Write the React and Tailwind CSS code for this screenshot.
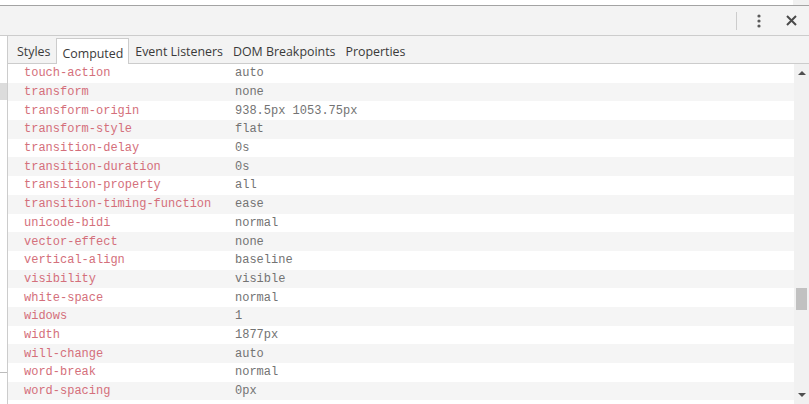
import React from 'react';

const rows = [
  ['touch-action', 'auto'],
  ['transform', 'none'],
  ['transform-origin', '938.5px 1053.75px'],
  ['transform-style', 'flat'],
  ['transition-delay', '0s'],
  ['transition-duration', '0s'],
  ['transition-property', 'all'],
  ['transition-timing-function', 'ease'],
  ['unicode-bidi', 'normal'],
  ['vector-effect', 'none'],
  ['vertical-align', 'baseline'],
  ['visibility', 'visible'],
  ['white-space', 'normal'],
  ['widows', '1'],
  ['width', '1877px'],
  ['will-change', 'auto'],
  ['word-break', 'normal'],
  ['word-spacing', '0px'],
];

const tabs = ['Styles', 'Computed', 'Event Listeners', 'DOM Breakpoints', 'Properties'];

function Kebab() {
  return (
    <svg width="4" height="14" viewBox="0 0 4 14">
      <circle cx="2" cy="2" r="1.6" fill="#5a5a5a" />
      <circle cx="2" cy="7" r="1.6" fill="#5a5a5a" />
      <circle cx="2" cy="12" r="1.6" fill="#5a5a5a" />
    </svg>
  );
}

function CloseIcon() {
  return (
    <svg width="11" height="11" viewBox="0 0 11 11">
      <path d="M1 1 L10 10 M10 1 L1 10" stroke="#4a4a4a" strokeWidth="2" />
    </svg>
  );
}

export default function App() {
  return (
    <div className="w-[809px] h-[404px] overflow-hidden flex flex-col bg-white font-['Open_Sans','Noto_Sans',sans-serif]">
      {/* strip of the page above */}
      <div className="h-[5px] flex justify-end">
        <div className="w-[16px] bg-[#f1f1f1]" />
      </div>

      {/* devtools toolbar */}
      <div className="h-[31px] bg-[#f3f3f3] border-t border-t-[#a3a3a3] border-b border-b-[#cccccc] flex items-center justify-end">
        <div className="w-px h-[18px] bg-[#cccccc] mr-[20px]" />
        <div className="mr-[25px] flex items-center"><Kebab /></div>
        <div className="mr-[12px] flex items-center"><CloseIcon /></div>
      </div>

      <div className="flex-1 flex min-h-0">
        {/* left pane edge */}
        <div className="w-[8px] border-r border-r-[#cccccc] flex flex-col">
          <div className="h-[47px]" />
          <div className="h-[17px] bg-[#dcdcdc] w-[7px]" />
          <div className="h-[272px]" />
          <div className="h-px bg-[#bcbcbc]" />
        </div>

        <div className="flex-1 flex flex-col min-w-0">
          {/* tabs */}
          <div className="h-[28px] bg-[#f3f3f3] border-b border-b-[#cccccc] flex items-end pl-[4px]">
            {tabs.map((t) => (
              <div
                key={t}
                className={
                  t === 'Computed'
                    ? 'h-[26px] pt-[5px] px-[5px] mx-[1px] bg-white border border-[#cccccc] border-b-0 -mb-px flex items-center text-[12.4px] text-[#3a3a3a]'
                    : 'h-[26px] pt-[5px] px-[5px] flex items-center text-[12.4px] text-[#3a3a3a]'
                }
              >
                {t}
              </div>
            ))}
          </div>

          <div className="flex-1 flex min-h-0">
            {/* property list */}
            <div className="flex-1 font-['Liberation_Mono',monospace] text-[12px]">
              {rows.map(([name, value], i) => (
                <div
                  key={name}
                  className={`h-[18.7px] flex items-center ${i % 2 === 1 ? 'bg-[#f5f5f5]' : 'bg-white'}`}
                >
                  <span className="w-[227px] pl-[16px] text-[#d46f7b] whitespace-nowrap">{name}</span>
                  <span className="text-[#737373] whitespace-nowrap">{value}</span>
                </div>
              ))}
            </div>

            {/* scrollbar */}
            <div className="w-[15px] bg-[#f1f1f1] flex flex-col items-center">
              <div className="mt-[7px] w-0 h-0 border-l-[4px] border-r-[4px] border-b-[4px] border-l-transparent border-r-transparent border-b-[#505050]" />
              <div className="mt-[213px] w-[11px] h-[22px] bg-[#c1c1c1]" />
              <div className="mt-auto mb-[7px] w-0 h-0 border-l-[4px] border-r-[4px] border-t-[4px] border-l-transparent border-r-transparent border-t-[#505050]" />
            </div>
          </div>
        </div>
      </div>
    </div>
  );
}
